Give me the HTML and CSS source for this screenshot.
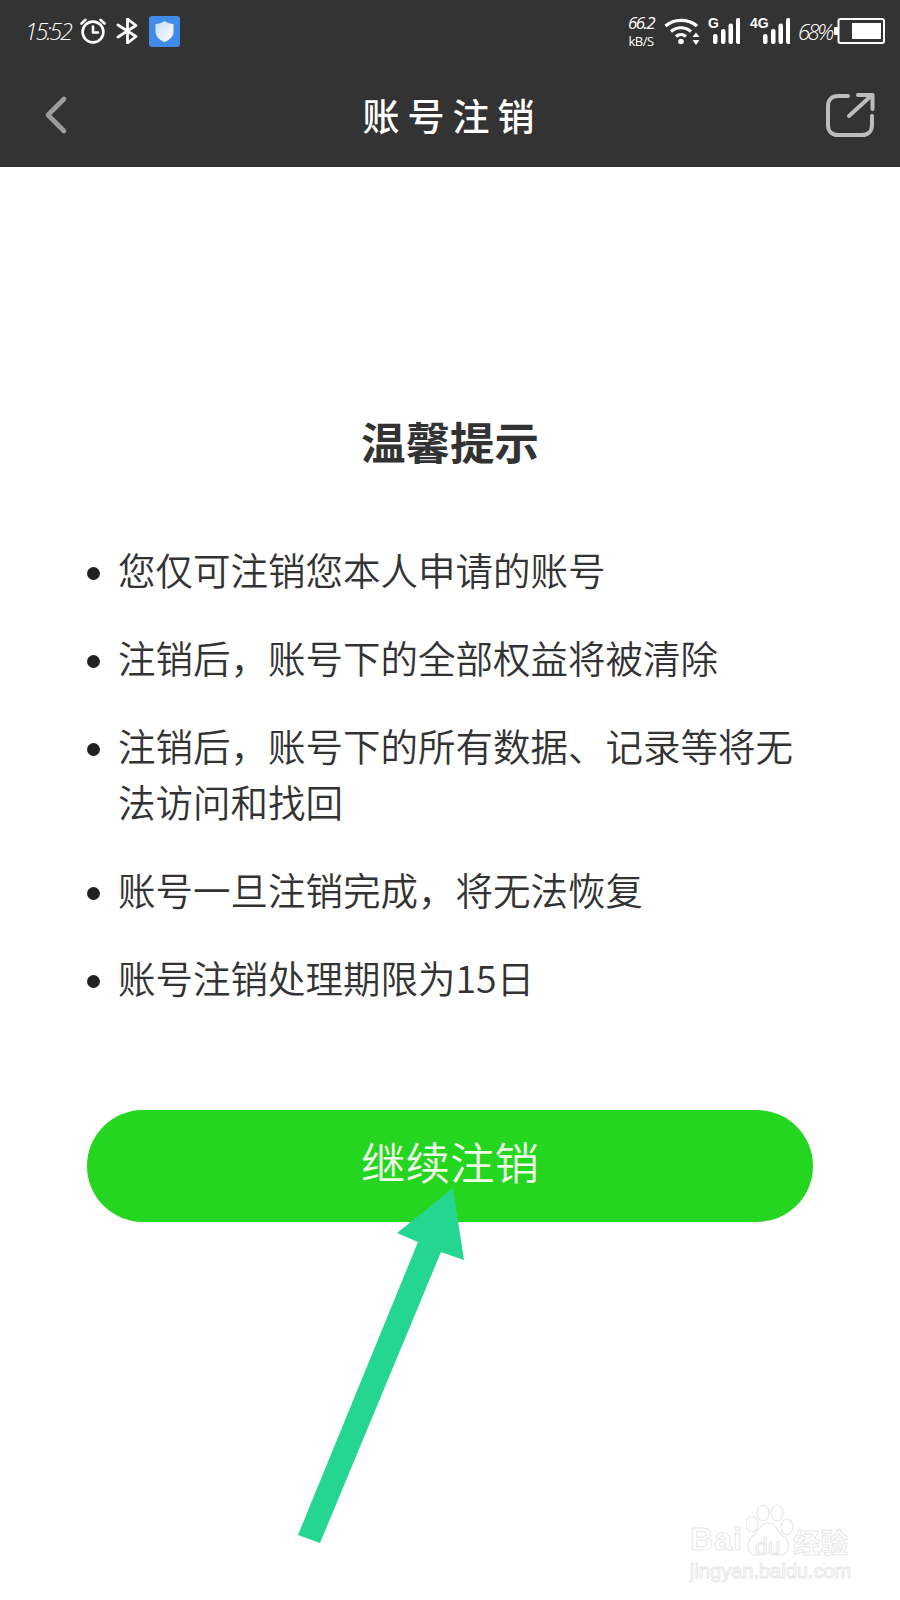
FILE: index.html
```html
<!DOCTYPE html>
<html lang="zh-CN">
<head>
<meta charset="utf-8">
<title>账号注销</title>
<link rel="stylesheet" href="styles.css">
</head>
<body>
<div class="page">
  <header class="head">
    <div class="status">
      <div class="status-left">
        <span class="time">15:52</span>
        <svg class="ic-alarm" width="28" height="28" viewBox="0 0 28 28" fill="none" stroke="#fff" stroke-width="2.6" stroke-linecap="round" stroke-linejoin="round"><circle cx="14" cy="15" r="10.4"/><path d="M14 9.5V15.5H19"/><path d="M2.5 6.5L6.5 2.8M25.5 6.5L21.5 2.8"/></svg>
        <svg class="ic-bt" width="24" height="26" viewBox="0 0 24 26" fill="none" stroke="#fff" stroke-width="2.8" stroke-linejoin="round" stroke-linecap="round"><path d="M2 7L20 18.5L11.5 25V1L20 7.5L2 19"/></svg>
        <svg class="ic-shield" width="31" height="31" viewBox="0 0 31 31"><defs><linearGradient id="sg" x1="0" y1="0" x2="1" y2="1"><stop offset="0" stop-color="#c6dcf8"/><stop offset="1" stop-color="#ffffff"/></linearGradient></defs><rect width="31" height="31" rx="3" fill="#418be8"/><path d="M15.5 5C18.500 7 21 7.800 24.500 8V15.500C24.500 20.500 20.500 24 15.500 26C10.500 24 6.500 20.500 6.500 15.500V8C10 7.800 12.500 7 15.500 5Z" fill="url(#sg)"/></svg>
      </div>
      <div class="status-right">
        <div class="speed"><span class="speed-num">66.2</span><span class="speed-unit">kB/S</span></div>
        <svg class="ic-wifi" width="36" height="28" viewBox="0 0 36 28" fill="none" stroke="#fff" stroke-width="3.2"><path d="M1.500 9C10 1.500 24 1.500 33 9"/><path d="M7 14.500C13 9.500 21 9.500 27 14.500"/><path d="M12 19.500C15 17 19 17 22 19.500"/><circle cx="17" cy="24.500" r="2.800" fill="#fff" stroke="none"/><path d="M32 15.500L35.500 20H28.500ZM32 28L28.500 23H35.500Z" fill="#fff" stroke="none"/></svg>
        <div class="sig sig-g">
          <span class="sig-label">G</span>
          <svg width="32" height="26" viewBox="0 0 32 26" fill="#fff"><rect x="5" y="16" width="4.500" height="10" rx="2"/><rect x="13" y="11" width="4.500" height="15" rx="2"/><rect x="20.500" y="5.500" width="4.500" height="20.500" rx="2"/><rect x="28" y="0" width="4.500" height="26" rx="2"/></svg>
        </div>
        <div class="sig sig-4g">
          <span class="sig-label">4G</span>
          <svg width="32" height="26" viewBox="0 0 32 26" fill="#fff"><rect x="5" y="16" width="4.500" height="10" rx="2"/><rect x="13" y="11" width="4.500" height="15" rx="2"/><rect x="20.500" y="5.500" width="4.500" height="20.500" rx="2"/><rect x="28" y="0" width="4.500" height="26" rx="2"/></svg>
        </div>
        <span class="pct">68%</span>
        <svg class="ic-batt" width="51" height="26" viewBox="0 0 51 26"><rect x="0" y="9" width="4" height="8" rx="1" fill="#fff"/><rect x="4.500" y="1" width="45.500" height="24" rx="2" fill="none" stroke="#fff" stroke-width="2"/><rect x="18" y="5" width="29" height="16" fill="#fff"/></svg>
      </div>
    </div>
    <nav class="nav">
      <svg class="ic-back" width="24" height="40" viewBox="0 0 24 40" fill="none" stroke="#9c9c9c" stroke-width="4.600" stroke-linecap="round" stroke-linejoin="round"><path d="M20 4L4 20L20 36"/></svg>
      <h1 class="nav-title">账号注销</h1>
      <svg class="ic-share" width="50" height="46" viewBox="0 0 50 46" fill="none" stroke="#bdbdbd" stroke-width="4" stroke-linecap="round" stroke-linejoin="round"><path d="M23 4H13C7 4 3 8 3 14V33C3 39 7 43 13 43H37C43 43 47 39 47 33V24"/><path d="M24 24L47 3"/><path d="M33 3H47.500V17"/></svg>
    </nav>
  </header>

  <main class="main">
    <h2 class="title">温馨提示</h2>
    <ul class="list">
      <li class="item">您仅可注销您本人申请的账号</li>
      <li class="item">注销后&#65292;账号下的全部权益将被清除</li>
      <li class="item">注销后&#65292;账号下的所有数据、记录等将无法访问和找回</li>
      <li class="item">账号一旦注销完成&#65292;将无法恢复</li>
      <li class="item">账号注销处理期限为15日</li>
    </ul>
    <button class="btn" type="button">继续注销</button>
  </main>

  <svg class="arrow" width="900" height="1600" viewBox="0 0 900 1600"><polygon points="453,1188 397,1233 418,1242 298,1535 320,1543 441,1252 464,1260" fill="#25d690"/></svg>

  <div class="mark">
    <div class="mark-top">
      <span class="mark-bai">Bai</span>
      <svg class="mark-paw" width="50" height="58" viewBox="0 0 50 58" fill="#fff" stroke="#e8e8e8" stroke-width="1.200"><ellipse cx="6" cy="21" rx="6" ry="8"/><ellipse cx="17" cy="10" rx="6" ry="8"/><ellipse cx="31" cy="10" rx="6" ry="8"/><ellipse cx="41" cy="24" rx="6" ry="8"/><path d="M22 20C29 20 32 28 37 33C46 40 43 52 34 52C29 52 26 50 22 50C18 50 15 52 10 52C1 52 -1 41 7 33C12 28 15 20 22 20Z"/></svg>
      <span class="mark-du">du</span>
      <span class="mark-cn">经验</span>
    </div>
    <div class="mark-url">jingyan.baidu.com</div>
  </div>
</div>
</body>
</html>
```
FILE: styles.css
```css
* { box-sizing: border-box; }
html, body { margin: 0; padding: 0; background: #fff; }
body { font-family: "Noto Sans CJK SC", "Noto Sans", sans-serif; }

.page {
  position: relative;
  width: 900px;
  height: 1600px;
  overflow: hidden;
  background: #fff;
}

/* header */
.head {
  height: 167px;
  background: #333333;
  color: #fff;
  display: flex;
  flex-direction: column;
}
.status {
  height: 62px;
  display: flex;
  justify-content: space-between;
  align-items: center;
  padding: 0 15px 0 25px;
}
.status-left, .status-right { display: flex; align-items: center; }
.time {
  font-family: "Open Sans", sans-serif;
  font-style: italic;
  font-weight: 300;
  font-size: 23px;
  letter-spacing: -2px;
  width: 54px;
}
.ic-alarm { margin-right: 9px; }
.ic-bt { margin-right: 9px; }
.speed {
  display: flex;
  flex-direction: column;
  align-items: center;
  width: 30px;
  margin-right: 8px;
  font-family: "Open Sans", sans-serif;
  font-weight: 400;
  line-height: 1;
}
.speed-num { font-size: 17px; letter-spacing: -1.600px; font-style: italic; margin-bottom: 4px; }
.speed-unit { font-size: 13px; letter-spacing: -.5px; }
.ic-wifi { margin-right: 8px; }
.sig { position: relative; display: flex; align-items: flex-end; height: 26px; }
.sig-label {
  font-family: "Liberation Sans", sans-serif;
  font-weight: 700;
  font-size: 14px;
  line-height: 1;
  position: absolute;
  top: -2px;
}
.sig-g { width: 32px; margin-right: 10px; }
.sig-g .sig-label { left: 0; }
.sig-4g { width: 40px; margin-right: 8px; justify-content: flex-end; }
.sig-4g .sig-label { left: 0; }
.pct {
  font-family: "Open Sans", sans-serif;
  font-style: italic;
  font-weight: 300;
  font-size: 22px;
  letter-spacing: -2.500px;
  width: 36px;
}

.nav {
  flex: 1;
  display: flex;
  align-items: center;
  justify-content: space-between;
  padding: 0 25px 0 44px;
}
.nav-title {
  margin: 0;
  font-size: 37px;
  font-weight: 500;
  letter-spacing: 8px;
  line-height: 48px;
  padding-left: 12px;
}

/* content */
.main {
  display: flex;
  flex-direction: column;
  padding: 244px 87px 0;
}
.title {
  margin: 0 0 70px;
  text-align: center;
  font-size: 44.500px;
  line-height: 60px;
  font-weight: 700;
  color: #333;
}
.list {
  list-style: none;
  margin: 0 0 105px;
  padding: 0;
  display: flex;
  flex-direction: column;
  gap: 32px;
}
.item {
  display: flex;
  gap: 18px;
  font-size: 37.500px;
  line-height: 56px;
  font-weight: 350;
  color: #333;
}
.item::before {
  content: "";
  flex: none;
  width: 13px;
  height: 13px;
  margin-top: 26px;
  border-radius: 50%;
  background: #222;
}
.btn {
  height: 112px;
  border: 0;
  padding: 0 0 11px;
  border-radius: 56px;
  background: #24d620;
  color: #f1fbe9;
  font-family: inherit;
  font-size: 44.500px;
  font-weight: 350;
}

/* annotation + watermark over the page */
.arrow { position: absolute; left: 0; top: 0; pointer-events: none; }
.mark {
  position: absolute;
  left: 690px;
  top: 1503px;
  width: 170px;
}
.mark-top { position: relative; height: 56px; }
.mark-bai, .mark-du, .mark-cn, .mark-url {
  position: absolute;
  color: #fff;
  -webkit-text-stroke: 1px #e8e8e8;
  line-height: 1;
  white-space: nowrap;
}
.mark-bai {
  left: 0;
  top: 20px;
  font-family: "Liberation Sans", sans-serif;
  font-weight: 700;
  font-size: 32px;
  letter-spacing: 1px;
}
.mark-paw { position: absolute; left: 56px; top: 0; }
.mark-du {
  left: 65px;
  top: 33px;
  font-family: "Liberation Sans", sans-serif;
  font-size: 23px;
}
.mark-cn {
  left: 103px;
  top: 25px;
  font-size: 27.500px;
  font-weight: 700;
}
.mark-url {
  left: 0;
  top: 58px;
  font-family: "Liberation Sans", sans-serif;
  font-size: 20px;
}
```
